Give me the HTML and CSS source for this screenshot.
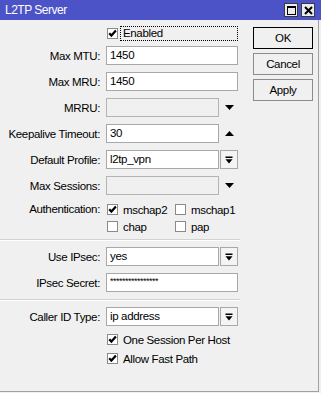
FILE: index.html
```html
<!DOCTYPE html>
<html>
<head>
<meta charset="utf-8">
<link rel="stylesheet" href="styles.css">
</head>
<body>
<div class="titlebar">
  <span class="title">L2TP Server</span>
  <div class="tb-btns">
    <span class="tb-btn"><svg width="9" height="9" viewBox="0 0 9 9"><rect x="0.5" y="0.5" width="8" height="8" fill="none" stroke="#000" stroke-width="1"/><rect x="0" y="0" width="9" height="2" fill="#000"/></svg></span>
    <span class="tb-btn"><svg width="9" height="9" viewBox="0 0 9 9"><path d="M1 1 L8 8 M8 1 L1 8" stroke="#000" stroke-width="2"/></svg></span>
  </div>
</div>
<div class="window">
  <div class="form">
    <div class="row row-check">
      <span class="label"></span>
      <div class="ctrl enabled">
        <span class="cb"><svg width="9" height="9" viewBox="0 0 9 9"><polyline points="1.2,4.2 3.4,6.6 7.9,1.6" fill="none" stroke="#000" stroke-width="2.2"/></svg></span>
        <span class="focus">Enabled</span>
      </div>
    </div>
    <div class="row row-field">
      <span class="label">Max MTU:</span>
      <div class="ctrl"><span class="input full">1450</span></div>
    </div>
    <div class="row row-field">
      <span class="label">Max MRU:</span>
      <div class="ctrl"><span class="input full">1450</span></div>
    </div>
    <div class="row row-field">
      <span class="label">MRRU:</span>
      <div class="ctrl"><span class="input short disabled"></span><svg class="tri" width="9" height="5" viewBox="0 0 9 5"><polygon points="0,0 9,0 4.5,5" fill="#000"/></svg></div>
    </div>
    <div class="row row-field">
      <span class="label">Keepalive Timeout:</span>
      <div class="ctrl"><span class="input short">30</span><svg class="tri" width="9" height="5" viewBox="0 0 9 5"><polygon points="0,5 9,5 4.5,0" fill="#000"/></svg></div>
    </div>
    <div class="row row-field">
      <span class="label">Default Profile:</span>
      <div class="ctrl"><span class="input short">l2tp_vpn</span><span class="dd"><svg width="8" height="8" viewBox="0 0 8 8"><rect x="0.5" y="0.5" width="7" height="1.5" fill="#000"/><polygon points="0.5,3.2 7.5,3.2 4,7.5" fill="#000"/></svg></span></div>
    </div>
    <div class="row row-field">
      <span class="label">Max Sessions:</span>
      <div class="ctrl"><span class="input short disabled"></span><svg class="tri" width="9" height="5" viewBox="0 0 9 5"><polygon points="0,0 9,0 4.5,5" fill="#000"/></svg></div>
    </div>
    <div class="row row-auth">
      <span class="label">Authentication:</span>
      <div class="auth">
        <label class="chk"><span class="cb"><svg width="9" height="9" viewBox="0 0 9 9"><polyline points="1.2,4.2 3.4,6.6 7.9,1.6" fill="none" stroke="#000" stroke-width="2.2"/></svg></span>mschap2</label>
        <label class="chk"><span class="cb"></span>mschap1</label>
        <label class="chk"><span class="cb"></span>chap</label>
        <label class="chk"><span class="cb"></span>pap</label>
      </div>
    </div>
    <div class="sep sep1"></div>
    <div class="row row-field">
      <span class="label">Use IPsec:</span>
      <div class="ctrl"><span class="input short">yes</span><span class="dd"><svg width="8" height="8" viewBox="0 0 8 8"><rect x="0.5" y="0.5" width="7" height="1.5" fill="#000"/><polygon points="0.5,3.2 7.5,3.2 4,7.5" fill="#000"/></svg></span></div>
    </div>
    <div class="row row-field">
      <span class="label">IPsec Secret:</span>
      <div class="ctrl"><span class="input full secret">****************</span></div>
    </div>
    <div class="sep sep2"></div>
    <div class="row row-field">
      <span class="label">Caller ID Type:</span>
      <div class="ctrl"><span class="input short">ip address</span><span class="dd"><svg width="8" height="8" viewBox="0 0 8 8"><rect x="0.5" y="0.5" width="7" height="1.5" fill="#000"/><polygon points="0.5,3.2 7.5,3.2 4,7.5" fill="#000"/></svg></span></div>
    </div>
    <div class="row row-check first-bottom">
      <span class="label"></span>
      <label class="chk"><span class="cb"><svg width="9" height="9" viewBox="0 0 9 9"><polyline points="1.2,4.2 3.4,6.6 7.9,1.6" fill="none" stroke="#000" stroke-width="2.2"/></svg></span>One Session Per Host</label>
    </div>
    <div class="row row-check second-bottom">
      <span class="label"></span>
      <label class="chk"><span class="cb"><svg width="9" height="9" viewBox="0 0 9 9"><polyline points="1.2,4.2 3.4,6.6 7.9,1.6" fill="none" stroke="#000" stroke-width="2.2"/></svg></span>Allow Fast Path</label>
    </div>
  </div>
  <div class="buttons">
    <div class="btn default">OK</div>
    <div class="btn">Cancel</div>
    <div class="btn">Apply</div>
  </div>
</div>
</body>
</html>
```
FILE: styles.css
```css
* { box-sizing: border-box; }
html, body { margin: 0; padding: 0; }
body {
  width: 321px;
  height: 393px;
  overflow: hidden;
  background: #f0f0f0;
  font-family: "Liberation Sans", Arial, sans-serif;
  font-size: 11.5px;
  letter-spacing: -0.35px;
  color: #000;
}
.titlebar {
  height: 20px;
  background: #4c53c6;
  display: flex;
  align-items: center;
  justify-content: space-between;
  padding: 0 6px 0 5px;
}
.title { color: #fff; font-size: 12px; letter-spacing: -0.5px; }
.tb-btns { display: flex; gap: 3px; }
.tb-btn {
  width: 14px;
  height: 14px;
  background: #ececec;
  border: 1px solid #3a3a3a;
  display: flex;
  align-items: center;
  justify-content: center;
}
.window {
  width: 319px;
  height: 372px;
  border-right: 1px solid #a0a0a0;
  border-bottom: 1px solid #a0a0a0;
  display: flex;
  align-items: flex-start;
}
.form {
  width: 240px;
  padding-top: 6px;
  display: flex;
  flex-direction: column;
}
.row {
  display: grid;
  grid-template-columns: 100px 132px;
  column-gap: 6px;
  align-items: center;
}
.label { text-align: right; white-space: nowrap; }
.row-check { height: 15px; }
.row-check:first-child { margin-bottom: 5px; }
.row-field { height: 19px; margin-bottom: 7px; }
.ctrl { display: flex; align-items: center; height: 100%; }
.enabled { height: 15px; }
.cb {
  width: 11px;
  height: 11px;
  margin-left: 1px;
  border: 1px solid #8a8a8a;
  background: #fff;
  display: inline-flex;
  align-items: center;
  justify-content: center;
  flex: none;
}
.focus {
  margin-left: 2px;
  width: 119px;
  height: 15px;
  border: 1px dotted #000;
  padding-left: 2px;
  line-height: 13px;
}
.input {
  height: 19px;
  border: 1px solid #a8a8a8;
  background: #fff;
  padding-left: 3px;
  line-height: 17px;
  white-space: nowrap;
  overflow: hidden;
}
.input.full { width: 132px; }
.input.short { width: 113px; }
.input.disabled { background: #f0f0f0; border-color: #b4b4b4; }
.input.secret { font-size: 9px; letter-spacing: -0.5px; line-height: 14px; }
.tri { margin-left: 6px; }
.dd {
  margin-left: 1px;
  width: 18px;
  height: 19px;
  border: 1px solid #a8a8a8;
  background: #f4f4f4;
  display: flex;
  align-items: center;
  justify-content: center;
}
.row-auth { align-items: start; margin-top: 0; }
.row-auth .label { line-height: 15px; }
.auth {
  display: grid;
  grid-template-columns: 68px 64px;
  grid-auto-rows: 15px;
  row-gap: 2px;
}
.chk { display: flex; align-items: center; gap: 5px; height: 15px; white-space: nowrap; }
.sep {
  width: 240px;
  height: 2px;
  border-top: 1px solid #d2d2d2;
  border-bottom: 1px solid #fff;
}
.sep1 { margin-top: 5px; margin-bottom: 6px; }
.sep2 { margin-top: 0; margin-bottom: 6px; }
.first-bottom { margin-top: -1px; margin-bottom: 4px; }
.buttons {
  margin-left: 13px;
  padding-top: 7px;
  width: 60px;
  display: flex;
  flex-direction: column;
  gap: 4px;
}
.btn {
  height: 22px;
  border: 1px solid #8c8c8c;
  background: #f0f0f0;
  display: flex;
  align-items: center;
  justify-content: center;
  font-size: 11.5px;
}
.btn.default { border-color: #000; }
```
